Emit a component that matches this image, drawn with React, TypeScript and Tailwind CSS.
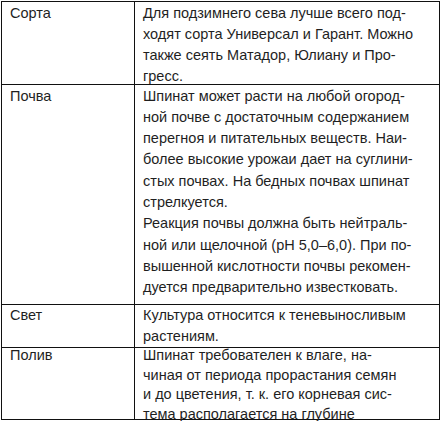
import React from 'react';

interface Row {
  label: string;
  lines: string[];
  rowClass: string;
  textClass: string;
}

const rows: Row[] = [
  {
    label: 'Сорта',
    rowClass: 'h-[82.5px]',
    textClass: 'leading-[21px] mt-[1px]',
    lines: [
      'Для подзимнего сева лучше всего под-',
      'ходят сорта Универсал и Гарант. Можно',
      'также сеять Матадор, Юлиану и Про-',
      'гресс.',
    ],
  },
  {
    label: 'Почва',
    rowClass: 'h-[220px]',
    textClass: 'leading-[21.3px] mt-[1px]',
    lines: [
      'Шпинат может расти на любой огород-',
      'ной почве с достаточным содержанием',
      'перегноя и питательных веществ. Наи-',
      'более высокие урожаи дает на суглини-',
      'стых почвах. На бедных почвах шпинат',
      'стрелкуется.',
      'Реакция почвы должна быть нейтраль-',
      'ной или щелочной (рН 5,0–6,0). При по-',
      'вышенной кислотности почвы рекомен-',
      'дуется предварительно известковать.',
    ],
  },
  {
    label: 'Свет',
    rowClass: 'h-[43.5px]',
    textClass: 'leading-[21px]',
    lines: ['Культура относится к теневыносливым', 'растениям.'],
  },
  {
    label: 'Полив',
    rowClass: 'h-[70.5px]',
    textClass: 'leading-[19.6px] -mt-[2px]',
    lines: [
      'Шпинат требователен к влаге, на-',
      'чиная от периода прорастания семян',
      'и до цветения, т. к. его корневая сис-',
      'тема располагается на глубине',
    ],
  },
];

export default function App() {
  return (
    <div className="w-[441px] h-[421px] bg-white pt-[1px] pl-[1px] overflow-hidden">
      <div
        className="w-[439px] border-[1.5px] border-[#111] text-[14.5px] text-[#1f1f1f]"
        style={{ fontFamily: '"Liberation Sans", Arial, sans-serif' }}
      >
        {rows.map((row, i) => (
          <div
            key={row.label}
            className={`flex ${row.rowClass} ${i < rows.length - 1 ? 'border-b-[1.5px] border-[#111]' : ''}`}
          >
            <div className="w-[133px] shrink-0 border-r-[1.5px] border-[#111] pl-[8px]">
              <div className={row.textClass}>{row.label}</div>
            </div>
            <div className="flex-1 pl-[8px] whitespace-nowrap">
              <div className={row.textClass}>
                {row.lines.map((l, j) => (
                  <div key={j}>{l}</div>
                ))}
              </div>
            </div>
          </div>
        ))}
      </div>
    </div>
  );
}
